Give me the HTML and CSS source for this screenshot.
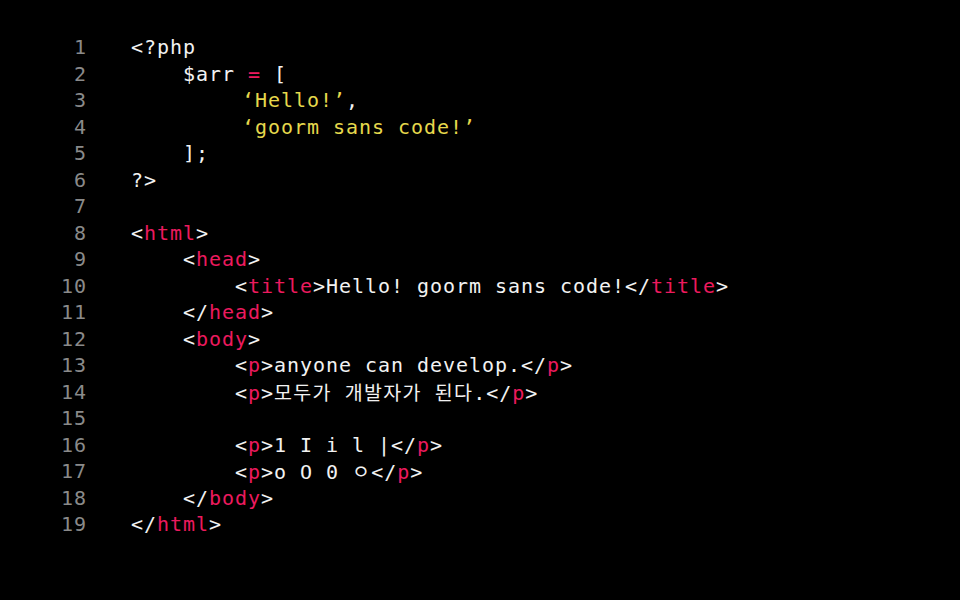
FILE: index.html
```html
<!DOCTYPE html>
<html lang="ko">
<head>
<meta charset="utf-8">
<title>goorm sans code</title>
<link rel="stylesheet" href="styles.css">
</head>
<body>
<div class="editor">
  <div class="gutter">
    <div>1</div><div>2</div><div>3</div><div>4</div><div>5</div><div>6</div><div>7</div><div>8</div><div>9</div><div>10</div><div>11</div><div>12</div><div>13</div><div>14</div><div>15</div><div>16</div><div>17</div><div>18</div><div>19</div>
  </div>
  <div class="code">
    <div class="ln">&lt;?php</div>
    <div class="ln">    $arr <span class="k">=</span> [</div>
    <div class="ln">        <span class="s"><span class="oq">‘</span>Hello!’</span>,</div>
    <div class="ln">        <span class="s"><span class="oq">‘</span>goorm sans code!’</span></div>
    <div class="ln">    ];</div>
    <div class="ln">?&gt;</div>
    <div class="ln"> </div>
    <div class="ln">&lt;<span class="k">html</span>&gt;</div>
    <div class="ln">    &lt;<span class="k">head</span>&gt;</div>
    <div class="ln">        &lt;<span class="k">title</span>&gt;Hello! goorm sans code!&lt;/<span class="k">title</span>&gt;</div>
    <div class="ln">    &lt;/<span class="k">head</span>&gt;</div>
    <div class="ln">    &lt;<span class="k">body</span>&gt;</div>
    <div class="ln">        &lt;<span class="k">p</span>&gt;anyone can develop.&lt;/<span class="k">p</span>&gt;</div>
    <div class="ln">        &lt;<span class="k">p</span>&gt;<span class="ko">모두가</span> <span class="ko">개발자가</span> <span class="ko">된다</span>.&lt;/<span class="k">p</span>&gt;</div>
    <div class="ln"> </div>
    <div class="ln">        &lt;<span class="k">p</span>&gt;1 I i l |&lt;/<span class="k">p</span>&gt;</div>
    <div class="ln">        &lt;<span class="k">p</span>&gt;o O 0 <span class="ko">ㅇ</span>&lt;/<span class="k">p</span>&gt;</div>
    <div class="ln">    &lt;/<span class="k">body</span>&gt;</div>
    <div class="ln">&lt;/<span class="k">html</span>&gt;</div>
  </div>
</div>
</body>
</html>
```
FILE: styles.css
```css
html, body {
  margin: 0;
  padding: 0;
  background: #000;
}
body {
  width: 960px;
  height: 600px;
  overflow: hidden;
}
.editor {
  display: flex;
  gap: 44px;
  padding: 34px 0 0 58px;
  font-family: "DejaVu Sans Mono", "Liberation Mono", "Noto Sans CJK KR", monospace;
  font-size: 20px;
  letter-spacing: 0.96px;
  line-height: 26.5px;
}
.gutter {
  width: 29px;
  text-align: right;
  color: #8a8a8a;
}
.code {
  color: #f2f2f2;
}
.ln {
  height: 26.5px;
  white-space: pre;
}
.k {
  color: #ec1a5e;
}
.s {
  color: #e6d84c;
}
.oq {
  display: inline-block;
  box-sizing: border-box;
  width: 20px;
  padding-left: 7px;
}
.ko {
  font-family: "Noto Sans CJK KR", sans-serif;
  font-size: 19.5px;
  letter-spacing: 1.3px;
}
```
